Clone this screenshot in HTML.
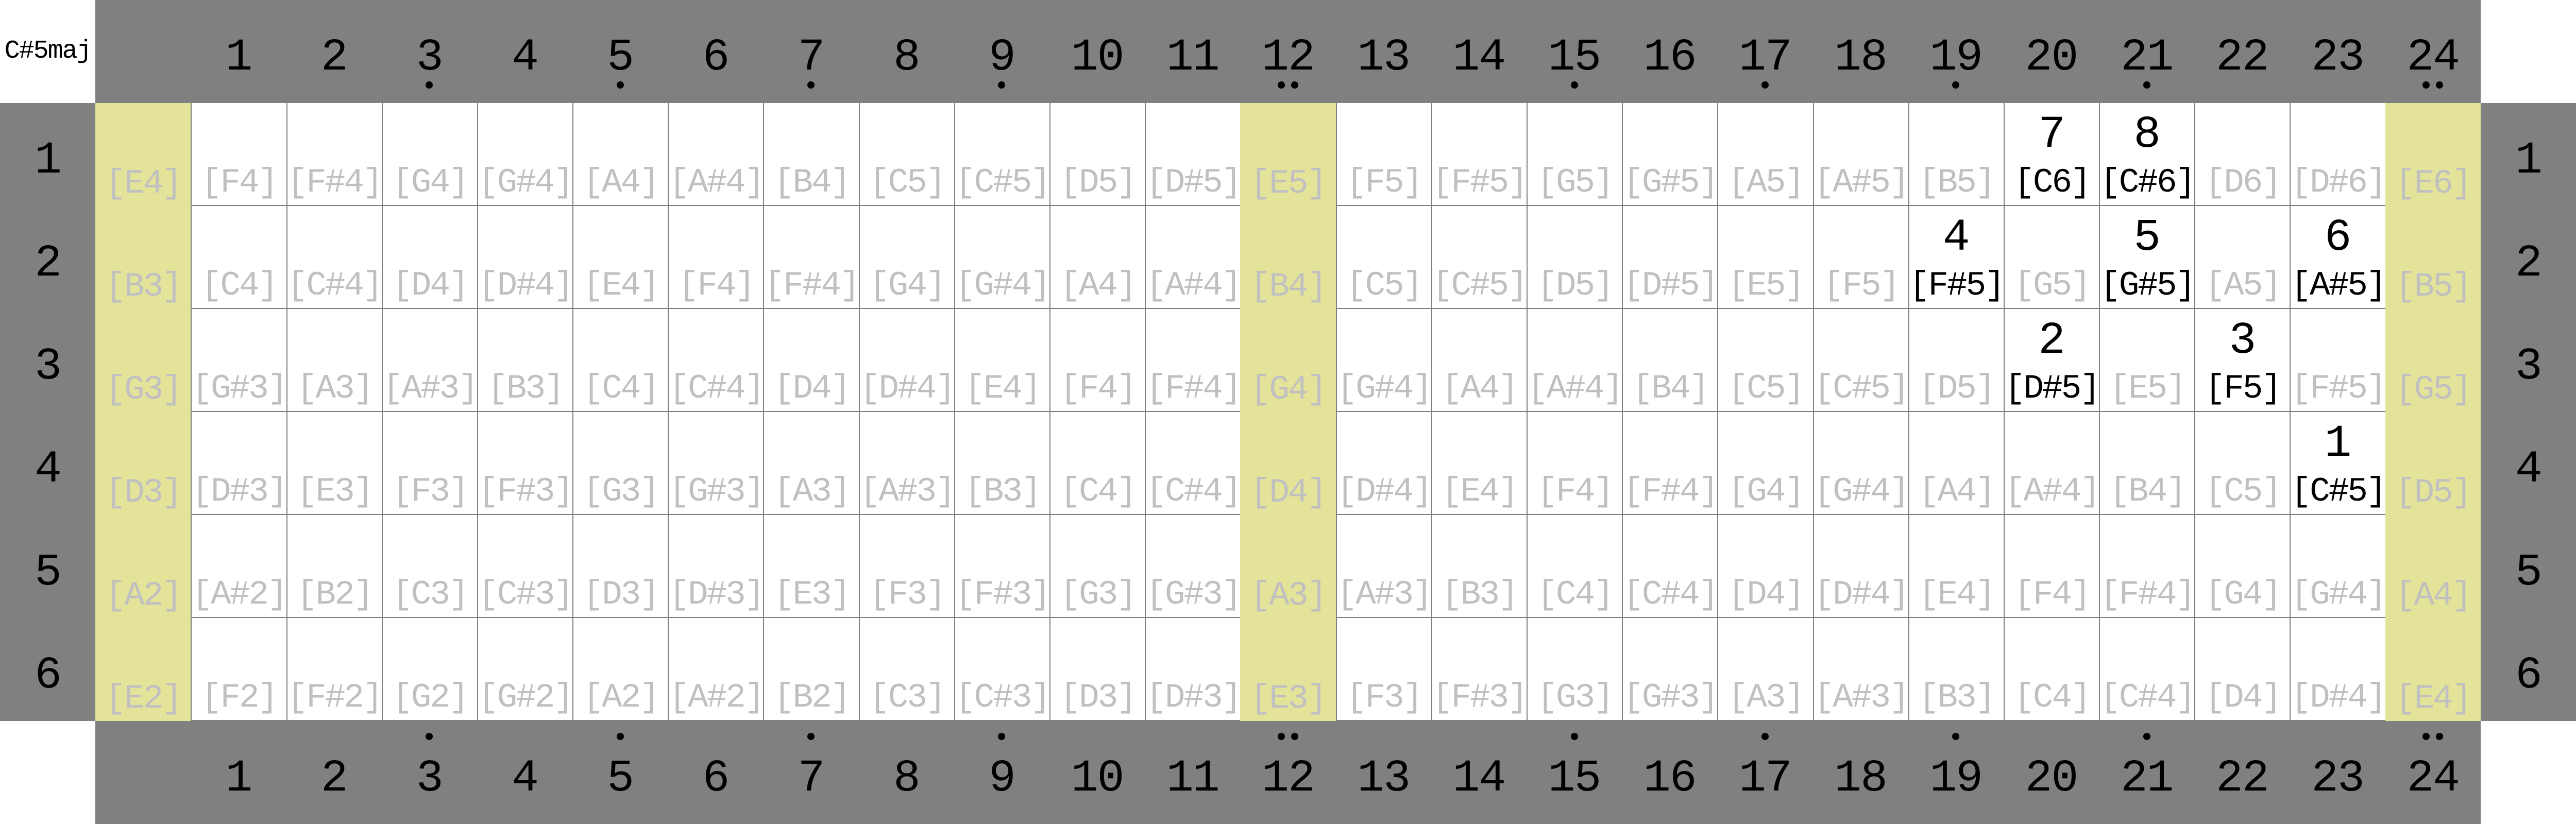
<!DOCTYPE html>
<html><head><meta charset="utf-8"><style>
*{box-sizing:border-box;margin:0;padding:0}
html,body{width:100%;height:1600px;overflow:hidden}
body{background:#fff;font-family:"Liberation Mono",monospace;display:grid;grid-template-columns:repeat(27,1fr);grid-template-rows:repeat(8,200px)}
.w{background:#fff;position:relative}
.title{font-size:50px;line-height:200px;text-align:center;letter-spacing:-2px;white-space:nowrap;overflow:hidden}
.h{background:#808080;position:relative}
.num{position:absolute;left:0;right:0;top:69px;text-align:center;font-size:88px;line-height:88px;letter-spacing:-2px}
.d{position:absolute;top:158px;left:50%;margin-left:-7px;width:14px;height:14px;border-radius:50%;background:#000}
.dd{margin-left:-20px}.dd2{margin-left:6px}
.b .d{top:23px}
.c{position:relative;border-left:2px solid #808080;border-bottom:2px solid #808080;background:#fff;min-width:0}
.c.y{background:#e3e39a;border-left:none;border-bottom:none}
.n{position:absolute;left:0;right:0;bottom:10px;line-height:66px;font-size:66px;text-align:center;color:#c0c0c0;letter-spacing:-3px;white-space:nowrap}
.n.k{color:#000}
.f{position:absolute;left:0;right:0;top:19px;font-size:88px;line-height:88px;text-align:center}
</style></head><body>
<div class="w title">C#5maj</div><div class="h"></div>
<div class="h"><span class="num">1</span></div><div class="h"><span class="num">2</span></div><div class="h"><span class="num">3</span><i class="d"></i></div><div class="h"><span class="num">4</span></div><div class="h"><span class="num">5</span><i class="d"></i></div><div class="h"><span class="num">6</span></div><div class="h"><span class="num">7</span><i class="d"></i></div><div class="h"><span class="num">8</span></div><div class="h"><span class="num">9</span><i class="d"></i></div><div class="h"><span class="num">10</span></div><div class="h"><span class="num">11</span></div><div class="h"><span class="num">12</span><i class="d dd"></i><i class="d dd2"></i></div><div class="h"><span class="num">13</span></div><div class="h"><span class="num">14</span></div><div class="h"><span class="num">15</span><i class="d"></i></div><div class="h"><span class="num">16</span></div><div class="h"><span class="num">17</span><i class="d"></i></div><div class="h"><span class="num">18</span></div><div class="h"><span class="num">19</span><i class="d"></i></div><div class="h"><span class="num">20</span></div><div class="h"><span class="num">21</span><i class="d"></i></div><div class="h"><span class="num">22</span></div><div class="h"><span class="num">23</span></div><div class="h"><span class="num">24</span><i class="d dd"></i><i class="d dd2"></i></div><div class="w"></div>

<div class="h"><span class="num">1</span></div>
<div class="c y"><span class="n">[E4]</span></div><div class="c"><span class="n">[F4]</span></div><div class="c"><span class="n">[F#4]</span></div><div class="c"><span class="n">[G4]</span></div><div class="c"><span class="n">[G#4]</span></div><div class="c"><span class="n">[A4]</span></div><div class="c"><span class="n">[A#4]</span></div><div class="c"><span class="n">[B4]</span></div><div class="c"><span class="n">[C5]</span></div><div class="c"><span class="n">[C#5]</span></div><div class="c"><span class="n">[D5]</span></div><div class="c"><span class="n">[D#5]</span></div><div class="c y"><span class="n">[E5]</span></div><div class="c"><span class="n">[F5]</span></div><div class="c"><span class="n">[F#5]</span></div><div class="c"><span class="n">[G5]</span></div><div class="c"><span class="n">[G#5]</span></div><div class="c"><span class="n">[A5]</span></div><div class="c"><span class="n">[A#5]</span></div><div class="c"><span class="n">[B5]</span></div><div class="c"><span class="f">7</span><span class="n k">[C6]</span></div><div class="c"><span class="f">8</span><span class="n k">[C#6]</span></div><div class="c"><span class="n">[D6]</span></div><div class="c"><span class="n">[D#6]</span></div><div class="c y"><span class="n">[E6]</span></div>
<div class="h"><span class="num">1</span></div>

<div class="h"><span class="num">2</span></div>
<div class="c y"><span class="n">[B3]</span></div><div class="c"><span class="n">[C4]</span></div><div class="c"><span class="n">[C#4]</span></div><div class="c"><span class="n">[D4]</span></div><div class="c"><span class="n">[D#4]</span></div><div class="c"><span class="n">[E4]</span></div><div class="c"><span class="n">[F4]</span></div><div class="c"><span class="n">[F#4]</span></div><div class="c"><span class="n">[G4]</span></div><div class="c"><span class="n">[G#4]</span></div><div class="c"><span class="n">[A4]</span></div><div class="c"><span class="n">[A#4]</span></div><div class="c y"><span class="n">[B4]</span></div><div class="c"><span class="n">[C5]</span></div><div class="c"><span class="n">[C#5]</span></div><div class="c"><span class="n">[D5]</span></div><div class="c"><span class="n">[D#5]</span></div><div class="c"><span class="n">[E5]</span></div><div class="c"><span class="n">[F5]</span></div><div class="c"><span class="f">4</span><span class="n k">[F#5]</span></div><div class="c"><span class="n">[G5]</span></div><div class="c"><span class="f">5</span><span class="n k">[G#5]</span></div><div class="c"><span class="n">[A5]</span></div><div class="c"><span class="f">6</span><span class="n k">[A#5]</span></div><div class="c y"><span class="n">[B5]</span></div>
<div class="h"><span class="num">2</span></div>

<div class="h"><span class="num">3</span></div>
<div class="c y"><span class="n">[G3]</span></div><div class="c"><span class="n">[G#3]</span></div><div class="c"><span class="n">[A3]</span></div><div class="c"><span class="n">[A#3]</span></div><div class="c"><span class="n">[B3]</span></div><div class="c"><span class="n">[C4]</span></div><div class="c"><span class="n">[C#4]</span></div><div class="c"><span class="n">[D4]</span></div><div class="c"><span class="n">[D#4]</span></div><div class="c"><span class="n">[E4]</span></div><div class="c"><span class="n">[F4]</span></div><div class="c"><span class="n">[F#4]</span></div><div class="c y"><span class="n">[G4]</span></div><div class="c"><span class="n">[G#4]</span></div><div class="c"><span class="n">[A4]</span></div><div class="c"><span class="n">[A#4]</span></div><div class="c"><span class="n">[B4]</span></div><div class="c"><span class="n">[C5]</span></div><div class="c"><span class="n">[C#5]</span></div><div class="c"><span class="n">[D5]</span></div><div class="c"><span class="f">2</span><span class="n k">[D#5]</span></div><div class="c"><span class="n">[E5]</span></div><div class="c"><span class="f">3</span><span class="n k">[F5]</span></div><div class="c"><span class="n">[F#5]</span></div><div class="c y"><span class="n">[G5]</span></div>
<div class="h"><span class="num">3</span></div>

<div class="h"><span class="num">4</span></div>
<div class="c y"><span class="n">[D3]</span></div><div class="c"><span class="n">[D#3]</span></div><div class="c"><span class="n">[E3]</span></div><div class="c"><span class="n">[F3]</span></div><div class="c"><span class="n">[F#3]</span></div><div class="c"><span class="n">[G3]</span></div><div class="c"><span class="n">[G#3]</span></div><div class="c"><span class="n">[A3]</span></div><div class="c"><span class="n">[A#3]</span></div><div class="c"><span class="n">[B3]</span></div><div class="c"><span class="n">[C4]</span></div><div class="c"><span class="n">[C#4]</span></div><div class="c y"><span class="n">[D4]</span></div><div class="c"><span class="n">[D#4]</span></div><div class="c"><span class="n">[E4]</span></div><div class="c"><span class="n">[F4]</span></div><div class="c"><span class="n">[F#4]</span></div><div class="c"><span class="n">[G4]</span></div><div class="c"><span class="n">[G#4]</span></div><div class="c"><span class="n">[A4]</span></div><div class="c"><span class="n">[A#4]</span></div><div class="c"><span class="n">[B4]</span></div><div class="c"><span class="n">[C5]</span></div><div class="c"><span class="f">1</span><span class="n k">[C#5]</span></div><div class="c y"><span class="n">[D5]</span></div>
<div class="h"><span class="num">4</span></div>

<div class="h"><span class="num">5</span></div>
<div class="c y"><span class="n">[A2]</span></div><div class="c"><span class="n">[A#2]</span></div><div class="c"><span class="n">[B2]</span></div><div class="c"><span class="n">[C3]</span></div><div class="c"><span class="n">[C#3]</span></div><div class="c"><span class="n">[D3]</span></div><div class="c"><span class="n">[D#3]</span></div><div class="c"><span class="n">[E3]</span></div><div class="c"><span class="n">[F3]</span></div><div class="c"><span class="n">[F#3]</span></div><div class="c"><span class="n">[G3]</span></div><div class="c"><span class="n">[G#3]</span></div><div class="c y"><span class="n">[A3]</span></div><div class="c"><span class="n">[A#3]</span></div><div class="c"><span class="n">[B3]</span></div><div class="c"><span class="n">[C4]</span></div><div class="c"><span class="n">[C#4]</span></div><div class="c"><span class="n">[D4]</span></div><div class="c"><span class="n">[D#4]</span></div><div class="c"><span class="n">[E4]</span></div><div class="c"><span class="n">[F4]</span></div><div class="c"><span class="n">[F#4]</span></div><div class="c"><span class="n">[G4]</span></div><div class="c"><span class="n">[G#4]</span></div><div class="c y"><span class="n">[A4]</span></div>
<div class="h"><span class="num">5</span></div>

<div class="h"><span class="num">6</span></div>
<div class="c y"><span class="n">[E2]</span></div><div class="c"><span class="n">[F2]</span></div><div class="c"><span class="n">[F#2]</span></div><div class="c"><span class="n">[G2]</span></div><div class="c"><span class="n">[G#2]</span></div><div class="c"><span class="n">[A2]</span></div><div class="c"><span class="n">[A#2]</span></div><div class="c"><span class="n">[B2]</span></div><div class="c"><span class="n">[C3]</span></div><div class="c"><span class="n">[C#3]</span></div><div class="c"><span class="n">[D3]</span></div><div class="c"><span class="n">[D#3]</span></div><div class="c y"><span class="n">[E3]</span></div><div class="c"><span class="n">[F3]</span></div><div class="c"><span class="n">[F#3]</span></div><div class="c"><span class="n">[G3]</span></div><div class="c"><span class="n">[G#3]</span></div><div class="c"><span class="n">[A3]</span></div><div class="c"><span class="n">[A#3]</span></div><div class="c"><span class="n">[B3]</span></div><div class="c"><span class="n">[C4]</span></div><div class="c"><span class="n">[C#4]</span></div><div class="c"><span class="n">[D4]</span></div><div class="c"><span class="n">[D#4]</span></div><div class="c y"><span class="n">[E4]</span></div>
<div class="h"><span class="num">6</span></div>

<div class="w"></div><div class="h b"></div>
<div class="h b"><span class="num">1</span></div><div class="h b"><span class="num">2</span></div><div class="h b"><span class="num">3</span><i class="d"></i></div><div class="h b"><span class="num">4</span></div><div class="h b"><span class="num">5</span><i class="d"></i></div><div class="h b"><span class="num">6</span></div><div class="h b"><span class="num">7</span><i class="d"></i></div><div class="h b"><span class="num">8</span></div><div class="h b"><span class="num">9</span><i class="d"></i></div><div class="h b"><span class="num">10</span></div><div class="h b"><span class="num">11</span></div><div class="h b"><span class="num">12</span><i class="d dd"></i><i class="d dd2"></i></div><div class="h b"><span class="num">13</span></div><div class="h b"><span class="num">14</span></div><div class="h b"><span class="num">15</span><i class="d"></i></div><div class="h b"><span class="num">16</span></div><div class="h b"><span class="num">17</span><i class="d"></i></div><div class="h b"><span class="num">18</span></div><div class="h b"><span class="num">19</span><i class="d"></i></div><div class="h b"><span class="num">20</span></div><div class="h b"><span class="num">21</span><i class="d"></i></div><div class="h b"><span class="num">22</span></div><div class="h b"><span class="num">23</span></div><div class="h b"><span class="num">24</span><i class="d dd"></i><i class="d dd2"></i></div><div class="w"></div>
</body></html>
